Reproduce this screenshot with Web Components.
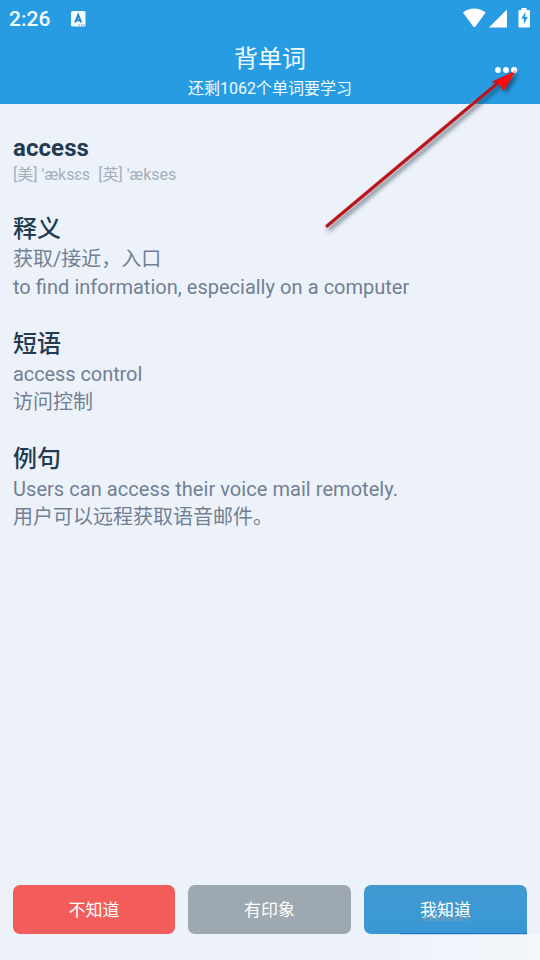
<!DOCTYPE html>
<html lang="zh-CN">
<head>
<meta charset="utf-8">
<title>背单词</title>
<style>
html,body{margin:0;height:100%}
body{background:#edf2fa;font-family:Roboto,"Noto Sans CJK SC",sans-serif;overflow:hidden}
</style>
</head>
<body>
<word-app></word-app>
<script>
const define=(name,html)=>{
  const t=document.createElement('template');t.innerHTML=html;
  customElements.define(name,class extends HTMLElement{
    constructor(){super();this.attachShadow({mode:'open'}).append(t.content.cloneNode(true));}
  });
};
define('status-bar',`<style>
:host{display:flex;height:37px;align-items:center;box-sizing:border-box;padding:0 9px;color:#f2fdff}
.time{font:500 21px/37px Roboto,sans-serif;padding-top:1px}
.key{margin-left:21px}.sp{flex:1}svg{display:block}
</style><span class="time">2:26</span>
<svg class="key" width="15" height="16" viewBox="0 0 15 16"><rect width="14.5" height="15.5" rx="1.5" fill="#effcff"/><path d="M4.200 11.500 7.200 4 10.200 11.500M5.200 9.300H9.300" fill="none" stroke="#2988c5" stroke-width="2"/><path d="M7.6 14h1.2M10 14h1.2M12.3 14h1.2" stroke="#2988c5" stroke-width="1.2"/></svg>
<span class="sp"></span>
<svg width="70" height="22" viewBox="461.500 7.500 70 22" style="margin-right:-1px"><path d="M462.5 12Q468 8 473.8 8T485.200 12L475.300 25.500Q473.800 27.500 472.300 25.500Z" fill="#fff"/><path d="M506.500 9V27H488.500Z" fill="#fff"/><path d="M521 7.500h5v2h2.500q1 0 1 1v15.500q0 1-1 1h-9.500q-1 0-1-1V10.500q0-1 1-1h2z" fill="#fff"/><path d="M524.800 11.500 520.800 18.300h2.500v5.700l4-7.500h-2.500z" fill="#289ce3"/></svg>`);
define('title-bar',`<style>
:host{display:flex;flex-direction:column;align-items:center;height:67px;color:#effcff}
.t{font-size:24px;line-height:30px;padding-top:7px}.s{font-size:16px;line-height:24px;margin-top:3px}
</style><div class="t"><slot name="title"></slot></div><div class="s"><slot></slot></div>`);
define('word-heading',`<style>
:host{display:block;height:80px}
.w{font-weight:700;font-size:24px;line-height:30px;color:#223b50;letter-spacing:.08px}
.p{font-size:16px;line-height:24px;color:#a3afbd;white-space:pre;letter-spacing:.04px}
</style><div class="w"><slot name="word"></slot></div><div class="p"><slot></slot></div>`);
define('word-section',`<style>
:host{display:block;height:115px;color:#718093;font-size:20px;line-height:28px}
.h{font-size:24px;line-height:32px;font-weight:500;color:#223b50}
</style><div class="h"><slot name="head"></slot></div><slot></slot>`);
define('answer-button',`<style>
:host{display:block;height:49px;border-radius:7px;background:var(--fill);color:#fff;font-size:17px;line-height:51px;text-align:center;overflow:hidden}
</style><slot></slot>`);
define('pointer-arrow',`<style>
:host{position:absolute;left:310px;top:55px;width:230px;height:190px;pointer-events:none}svg{display:block}
</style><svg width="230" height="190" viewBox="310 55 230 190"><defs><filter id="s" x="-20%" y="-20%" width="140%" height="140%"><feDropShadow dx="2.500" dy="3" stdDeviation="2" flood-color="#152535" flood-opacity=".6"/></filter><linearGradient id="g" x1="499" y1="72" x2="510" y2="86" gradientUnits="userSpaceOnUse"><stop stop-color="#a30b18"/><stop offset=".5" stop-color="#ff0a09"/><stop offset="1" stop-color="#ef0c12"/></linearGradient></defs><g filter="url(#s)"><path d="M327 226 476 101" stroke="#f5a5aa" stroke-width="4" stroke-linecap="round" opacity=".55"/><path d="M327 226 499 82" stroke="#b7171f" stroke-width="3" stroke-linecap="round"/><path d="M516.500 70 503.500 91 499.500 84 491.500 82Z" fill="url(#g)"/></g></svg>`);
define('word-app',`<style>
:host{display:flex;flex-direction:column;height:960px;width:540px;position:relative;overflow:hidden;background:#edf2fa}
header{background:#289ce3;height:104px;flex:none}
main{flex:1;padding:29px 13px 0}
footer{display:grid;grid-template-columns:162px 163px 163px;gap:13px;padding:0 13px 26px}
.dots{position:absolute;left:494px;top:66px}
.haze{position:absolute;left:390px;top:905px}
.en{word-spacing:.16px}.ex{letter-spacing:.05px}.ph{letter-spacing:-.08px}
</style>
<header><status-bar></status-bar><title-bar><span slot="title">背单词</span>还剩1062个单词要学习</title-bar></header>
<main>
<word-heading><span slot="word">access</span>[美] 'æksɛs  [英] 'ækses</word-heading>
<word-section><span slot="head">释义</span><div>获取/接近，入口</div><div class="en">to find information, especially on a computer</div></word-section>
<word-section><span slot="head">短语</span><div class="ph">access control</div><div>访问控制</div></word-section>
<word-section><span slot="head">例句</span><div class="ex">Users can access their voice mail remotely.</div><div>用户可以远程获取语音邮件。</div></word-section>
</main>
<footer><answer-button style="--fill:#f25d5b">不知道</answer-button><answer-button style="--fill:#9ea8b0">有印象</answer-button><answer-button style="--fill:linear-gradient(#4299d1,#3898d5)">我知道</answer-button></footer>
<svg class="dots" width="25" height="9"><g fill="#fff"><circle cx="4" cy="4" r="2.900"/><circle cx="12" cy="4" r="2.900"/><circle cx="20" cy="4" r="2.900"/></g></svg>
<svg class="haze" width="150" height="55"><defs><filter id="b" x="-10%" y="-50%" width="120%" height="200%"><feGaussianBlur stdDeviation=".6"/></filter><linearGradient id="w"><stop stop-color="#fff" stop-opacity="0"/><stop offset=".5" stop-color="#fff" stop-opacity=".25"/><stop offset="1" stop-color="#fff" stop-opacity=".35"/></linearGradient></defs><rect y="29.500" width="150" height="26" fill="url(#w)"/><path d="M132 22h5v7h-5z" fill="#3898d5"/><path d="M10 28.600H137" stroke="#1672af" stroke-width="1.100" opacity=".8"/><g fill="none"><path d="M32 6.500h15M49 7h13M65 7h14" stroke="#e9faff" stroke-width="6" stroke-dasharray="3 1.500" opacity=".6" filter="url(#b)"/><path d="M33 13.500h46v.01" stroke="#829eab" stroke-width="5" stroke-dasharray="4 2" opacity=".6"/></g></svg>
<pointer-arrow></pointer-arrow>
<svg class="dots" width="25" height="9"><circle cx="20.300" cy="4" r="2.200" fill="none" stroke="#fff" stroke-width="1.300" opacity=".85"/></svg>`);
</script>
</body>
</html>
